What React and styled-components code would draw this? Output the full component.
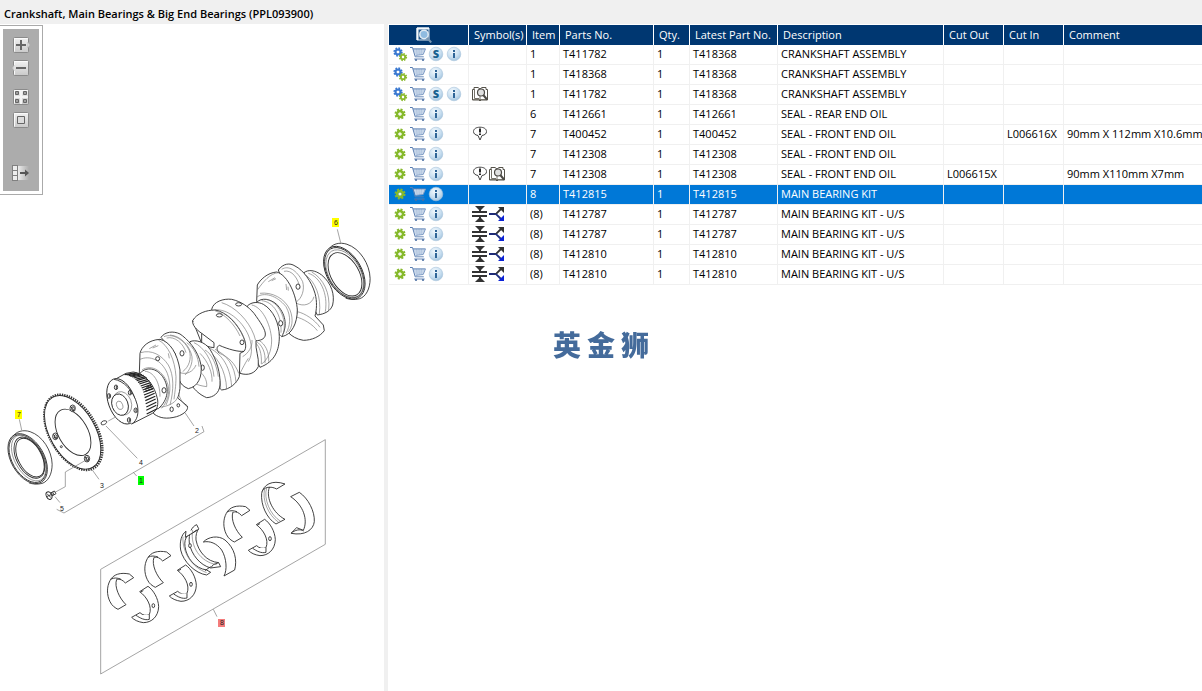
import { useState } from "react";

// styles
import styled, { createGlobalStyle } from "styled-components";

// Colors
const navy = "#003771";
const selectedBlue = "#0078d7";
const line = "#f0f0f0";
const steel = "#446b9b";

const columns = [
  { label: "Symbol(s)", width: 58 },
  { label: "Item", width: 33 },
  { label: "Parts No.", width: 94 },
  { label: "Qty.", width: 36 },
  { label: "Latest Part No.", width: 88 },
  { label: "Description", width: 166 },
  { label: "Cut Out", width: 60 },
  { label: "Cut In", width: 60 },
  { label: "Comment" },
];

const parts = [
  { kit: true, s: true, item: "1", no: "T411782", latest: "T418368", desc: "CRANKSHAFT ASSEMBLY" },
  { kit: true, item: "1", no: "T418368", latest: "T418368", desc: "CRANKSHAFT ASSEMBLY" },
  { kit: true, s: true, symbols: ["book"], item: "1", no: "T411782", latest: "T418368", desc: "CRANKSHAFT ASSEMBLY" },
  { item: "6", no: "T412661", latest: "T412661", desc: "SEAL - REAR END OIL" },
  { symbols: ["note"], item: "7", no: "T400452", latest: "T400452", desc: "SEAL - FRONT END OIL", cutIn: "L006616X", comment: "90mm X 112mm X10.6mm" },
  { item: "7", no: "T412308", latest: "T412308", desc: "SEAL - FRONT END OIL" },
  { symbols: ["note", "book"], item: "7", no: "T412308", latest: "T412308", desc: "SEAL - FRONT END OIL", cutOut: "L006615X", comment: "90mm X110mm X7mm" },
  { item: "8", no: "T412815", latest: "T412815", desc: "MAIN BEARING KIT" },
  { symbols: ["size", "branch"], item: "(8)", no: "T412787", latest: "T412787", desc: "MAIN BEARING KIT - U/S" },
  { symbols: ["size", "branch"], item: "(8)", no: "T412787", latest: "T412787", desc: "MAIN BEARING KIT - U/S" },
  { symbols: ["size", "branch"], item: "(8)", no: "T412810", latest: "T412810", desc: "MAIN BEARING KIT - U/S" },
  { symbols: ["size", "branch"], item: "(8)", no: "T412810", latest: "T412810", desc: "MAIN BEARING KIT - U/S" },
];

const App = () => {
  const [selected, setSelected] = useState(7);

  return (
    <Page>
      <GlobalStyle />
      <Title>Crankshaft, Main Bearings &amp; Big End Bearings (PPL093900)</Title>
      <Panes>
        <Viewer>
          <Diagram />
          <ToolFrame>
            <Tools>
              <Tool aria-label="Zoom in"><ZoomInIcon /></Tool>
              <Tool aria-label="Zoom out"><ZoomOutIcon /></Tool>
              <Tool $gap={6} aria-label="Fit"><FitIcon /></Tool>
              <Tool aria-label="Actual size"><ActualIcon /></Tool>
              <Tool $gap={30} aria-label="Hide list"><HideIcon /></Tool>
            </Tools>
          </ToolFrame>
        </Viewer>
        <List>
          <Table>
            <colgroup>
              <Col $width={80} />
              {columns.map((c) => (
                <Col key={c.label} $width={c.width} />
              ))}
            </colgroup>
            <thead>
              <tr>
                <Th $center>
                  <IconButton aria-label="Search parts"><SearchIcon /></IconButton>
                </Th>
                {columns.map((c) => (
                  <Th key={c.label}>{c.label}</Th>
                ))}
              </tr>
            </thead>
            <tbody>
              {parts.map((p, i) => (
                <Tr key={i} $selected={i === selected} onClick={() => setSelected(i)}>
                  <Td>
                    <Actions>
                      <IconButton aria-label="Part">{p.kit ? <KitIcon /> : <GearIcon />}</IconButton>
                      <IconButton aria-label="Add to cart"><CartIcon /></IconButton>
                      {p.s && <IconButton aria-label="Supersession"><Badge letter="S" /></IconButton>}
                      <IconButton aria-label="Information"><Badge letter="i" /></IconButton>
                    </Actions>
                  </Td>
                  <Td>
                    <Symbols>
                      {(p.symbols || []).map((name) => {
                        const Symbol = symbolIcons[name];
                        return <Symbol key={name} />;
                      })}
                    </Symbols>
                  </Td>
                  <Td>{p.item}</Td>
                  <Td>{p.no}</Td>
                  <Td>1</Td>
                  <Td>{p.latest}</Td>
                  <Td>{p.desc}</Td>
                  <Td>{p.cutOut}</Td>
                  <Td>{p.cutIn}</Td>
                  <Td>{p.comment}</Td>
                </Tr>
              ))}
            </tbody>
          </Table>
        </List>
      </Panes>
      <Watermark>
        <span>英</span>
        <span>金</span>
        <span>狮</span>
      </Watermark>
    </Page>
  );
};

// Toolbar icons
const Plate = () => (
  <>
    <defs>
      <linearGradient id="plate" x1="0" y1="0" x2="0" y2="1">
        <stop offset="0" stopColor="#f2f2f2" />
        <stop offset="1" stopColor="#c9c9c9" />
      </linearGradient>
    </defs>
    <rect x="1.5" y="0.5" width="15" height="15" rx="1" fill="url(#plate)" stroke="#8a8a8a" />
    <path d="M2.5 14.5v-13h13" fill="none" stroke="#fafafa" />
  </>
);

const ZoomInIcon = () => (
  <svg width="18" height="16" viewBox="0 0 18 16">
    <Plate />
    <path d="M16 5l2 3-2 3z" fill="#e8e8e8" stroke="#999" strokeWidth="0.5" />
    <path d="M9 3v10M4 8h10" stroke="#666" strokeWidth="2" />
  </svg>
);

const ZoomOutIcon = () => (
  <svg width="18" height="16" viewBox="0 0 18 16">
    <Plate />
    <path d="M2 5L0 8l2 3z" fill="#e8e8e8" stroke="#999" strokeWidth="0.5" />
    <path d="M4 8h10" stroke="#666" strokeWidth="2" />
  </svg>
);

const FitIcon = () => (
  <svg width="18" height="16" viewBox="0 0 18 16">
    <Plate />
    <path d="M9 1v14M2 8h14" stroke="#f4f4f4" strokeWidth="2" />
    <path d="M3.5 2.5h3v3h-3zM11.5 2.5h3v3h-3zM3.5 10.5h3v3h-3zM11.5 10.5h3v3h-3z" fill="#a0a0a0" stroke="#666" />
  </svg>
);

const ActualIcon = () => (
  <svg width="18" height="16" viewBox="0 0 18 16">
    <Plate />
    <path d="M5.5 4.5h7v7h-7z" fill="#dcdcdc" stroke="#666" />
  </svg>
);

const HideIcon = () => (
  <svg width="18" height="16" viewBox="0 0 18 16">
    <defs>
      <linearGradient id="fade">
        <stop offset="0" stopColor="#ececec" />
        <stop offset="1" stopColor="#acacac" />
      </linearGradient>
    </defs>
    <rect x="0" y="0" width="6" height="16" fill="#808080" />
    <path d="M1 1h4v4H1zM1 6h4v4H1zM1 11h4v4H1z" fill="#ededed" />
    <rect x="6" y="1" width="11" height="14" fill="url(#fade)" />
    <path d="M8 8h7" stroke="#555" strokeWidth="2" />
    <path d="M13 4.500l4 3.500-4 3.500z" fill="#555" />
  </svg>
);

// Row icons
const Cog = ({ x, y, r, fill, hole = "#fff" }) => (
  <g transform={`translate(${x} ${y})`}>
    <circle r={r * 0.86} fill="none" stroke={fill} strokeWidth={r * 0.4} strokeDasharray={`${r * 0.38} ${r * 0.295}`} />
    <circle r={r * 0.55} fill="none" stroke={fill} strokeWidth={r * 0.5} />
    <circle r={r * 0.3} fill={hole} />
  </g>
);

const GearIcon = () => (
  <svg width="16" height="16" viewBox="0 0 16 16">
    <Cog x={8} y={8} r={5.2} fill="#86b92b" hole="#f4fae6" />
  </svg>
);

const KitIcon = () => (
  <svg width="16" height="16" viewBox="0 0 16 16">
    <Cog x={6} y={6} r={4.4} fill="#3a78d0" />
    <Cog x={11} y={11} r={3.900} fill="#8aba2c" />
  </svg>
);

const CartIcon = () => (
  <svg width="16" height="16" viewBox="0 0 16 16">
    <path d="M3.500 3H15.500l-2.500 5.500-7.500.8z" fill="#d3dfee" />
    <path d="M4 5h11M4.700 7h9.300M6.500 3l.7 6M9 3l.3 6M11.500 3l-.4 6" fill="none" stroke="#9db6d6" strokeWidth="0.500" />
    <path d="M0 1.500h2.500l2.700 9.300M3 2.900h12.500" fill="none" stroke="#5b7fb2" />
    <path d="M15.500 2.900l-2.300 5.600-7.700.9" fill="none" stroke="#7f9dc6" />
    <path d="M5.200 10.800h8.600M4.200 13h10.500" fill="none" stroke="#5b7fb2" strokeWidth="0.900" />
    <circle cx="6" cy="14" r="1.100" fill="#4d70a2" />
    <circle cx="13" cy="14" r="1.100" fill="#4d70a2" />
  </svg>
);

const Badge = ({ letter }) => (
  <svg width="16" height="16" viewBox="0 0 16 16">
    <defs>
      <radialGradient id="badge" cx="0.4" cy="0.3" r="0.75">
        <stop offset="0" stopColor="#f1f8fd" />
        <stop offset="0.6" stopColor="#c9dff0" />
        <stop offset="1" stopColor="#9dc0dc" />
      </radialGradient>
    </defs>
    <circle cx="8" cy="8" r="6.800" fill="url(#badge)" stroke="#a9c5dc" strokeWidth="0.600" />
    {letter === "i" ? (
      <path d="M7 4h2v2H7zM7 7h2v5H7z" fill="#2f6597" />
    ) : (
      <BadgeText x="8" y="12">{letter}</BadgeText>
    )}
  </svg>
);

const SearchIcon = () => (
  <svg width="16" height="16" viewBox="0 0 16 16">
    <path d="M1 1h12v12H1z" fill="#24598d" stroke="#dbe8f2" />
    <path d="M1 1.500h12M1.500 1v12" stroke="#f4f8fb" strokeWidth="2" />
    <circle cx="8" cy="7.500" r="4.200" fill="#8fbbe0" stroke="#dfeaf3" strokeWidth="1.500" />
    <path d="M11.200 11l4 4.500" stroke="#7895b0" strokeWidth="2" />
  </svg>
);

// Symbol icons
const BookIcon = () => (
  <svg width="16" height="16" viewBox="0 0 16 16">
    <path d="M0.500 3.500h1.500V1.500h4L8 3l2-1.500h4v2h1.500v10.500H9L8 15l-1-1H0.500z" fill="#fff" stroke="#55524a" />
    <path d="M2.500 3v9.500h4.500M8 3v11M1 13.500h14" fill="none" stroke="#77736a" />
    <circle cx="9" cy="6.500" r="3.500" fill="#e0e0e0" stroke="#4c4a45" strokeWidth="1.200" />
    <path d="M11.300 9l3.700 4.500" stroke="#4c4a45" strokeWidth="2" />
  </svg>
);

const NoteIcon = () => (
  <svg width="16" height="16" viewBox="0 0 16 16">
    <path d="M6 9.500C3 9 1.500 7.500 1.500 5.500 1.500 3 4 1.200 8 1.200s6.500 1.800 6.500 4.300c0 2.200-1.500 3.500-4.500 4L8 14z" fill="#fff" stroke="#444" />
    <path d="M8 2.500v4M8 7.500v1.500" stroke="#111" strokeWidth="1.800" />
  </svg>
);

const SizeIcon = () => (
  <svg width="16" height="16" viewBox="0 0 16 16">
    <path d="M3 0h10L9 4v1H7V4zM0 5h15v2H0zM0 9h15v2H0zM7 11h2v1l4 4H3l4-4z" fill="#333" />
  </svg>
);

const BranchIcon = () => (
  <svg width="16" height="16" viewBox="0 0 16 16">
    <path d="M0 8h6" stroke="#1f2b78" strokeWidth="2" />
    <path d="M5.500 8l2-.5 5-5" fill="none" stroke="#333" strokeWidth="1.800" />
    <path d="M5.500 8l2 .5 5 5" fill="none" stroke="#20307f" strokeWidth="1.800" />
    <path d="M9 1h6v6z" fill="#333" />
    <path d="M15 9v6H9z" fill="#0b22d6" />
  </svg>
);

const symbolIcons = { book: BookIcon, note: NoteIcon, size: SizeIcon, branch: BranchIcon };

// Diagram parts
const Seal = ({ x, y, scale = 1 }) => (
  <g transform={`translate(${x} ${y}) scale(${scale})`}>
    <path d="M-52 -66C-38 -90 -14 -94 8 -87C48 -74 78 -26 79 18C79 50 66 74 46 80C30 84 16 82 4 78" />
    <ellipse rx="53" ry="88" transform="rotate(-30)" />
    <ellipse rx="50" ry="84" transform="rotate(-30)" />
  </g>
);

const UpperShell = ({ x, y }) => (
  <g transform={`translate(${x} ${y})`}>
    <path d="M60 452C70 432 92 427 118 432L131 443L106 459C98 450 90 446 80 448C72 470 88 505 108 524L84 538C76 534 66 528 60 515C50 495 50 470 60 452Z" />
    <path d="M62 448C72 442 82 444 92 447" />
  </g>
);

const LowerShell = ({ x, y }) => (
  <g transform={`translate(${x} ${y})`}>
    <path d="M149 485L174 469C190 480 205 505 206 530C205 560 185 578 160 578C145 576 132 570 125 562L150 548C158 556 168 558 178 554C188 530 170 500 149 485Z" />
    <path d="M138 556C150 564 164 572 178 568L178 554M152 486L160 482" />
    <ellipse cx="190" cy="527" rx="4" ry="6" />
  </g>
);

// gear teeth on the crankshaft nose
const teeth = Array.from({ length: 21 }, (_, i) => {
  const t = i / 20;
  const u = 1 - t;
  return {
    x: Math.round(u * u * 104 + 2 * u * t * 166 + t * t * 170),
    y: Math.round(u * u * 194 + 2 * u * t * 202 + t * t * 312),
  };
});

const Diagram = () => (
  <Drawing viewBox="0 24 384 667" role="img" aria-label="Crankshaft diagram">
    {/* shaft, rear half */}
    <g transform="translate(180 210) scale(0.3333)">
      <path d="M372 188C385 178 405 180 425 195C455 220 465 255 458 285C452 303 435 312 412 315L380 250Z" />
      <path className="thin" d="M385 190C420 200 445 250 436 305M395 186C430 205 452 250 446 300M378 196C405 215 425 260 418 312" />
      <path d="M295 180C310 160 330 158 345 168C370 180 395 215 405 250C412 275 410 300 405 318L430 345L433 362C420 380 395 391 370 391C350 388 335 378 325 368L340 300Z" />
      <path className="thin" d="M305 178C325 165 350 180 368 215C375 240 365 265 350 275M312 184C335 178 355 205 360 235M350 280C370 290 395 285 402 260M352 305C375 310 405 330 420 352M345 320C370 325 400 345 412 362M352 312L350 290" />
      <ellipse cx="354" cy="230" rx="6" ry="8" />
      <path d="M230 275L232 225C240 210 262 188 290 186C325 195 350 260 352 300C352 340 335 375 305 380L262 330Z" />
      <path className="thin" d="M232 240C250 215 270 190 295 188M240 250C275 245 315 265 330 300C342 330 335 355 325 365M265 215L285 203M275 212L288 206M318 222L320 240M324 230L325 242M230 262C250 245 290 255 318 290C335 320 330 350 318 370" />
      <path d="M230 277C245 262 270 266 290 283C315 310 325 345 305 380" />
      <path className="thin" d="M245 272C280 275 306 315 303 368M258 268C295 275 322 325 310 372" />
      <ellipse cx="302" cy="340" rx="6" ry="8" />
      <path d="M202 288C215 275 235 275 250 283C280 300 298 340 298 380C298 420 285 455 240 472L205 400Z" />
      <path className="thin" d="M215 285C245 290 272 340 275 390C275 425 262 450 245 462M230 395C245 405 258 425 255 460M238 392C255 402 268 425 266 455M228 400C238 410 246 430 244 462" />
      <path d="M95 298C100 275 130 265 155 268C185 275 205 290 222 310C240 335 258 360 256 375C254 388 240 392 228 392C225 420 238 440 235 470C225 490 205 498 180 490L150 400Z" />
      <path className="thin" d="M125 278C165 290 205 330 222 375C225 385 226 390 228 392M104 300C140 295 185 330 205 375C215 400 220 430 205 455M205 445C195 460 188 475 180 490M188 440C205 430 218 410 216 390" />
      <path d="M38 332C50 310 80 300 105 300C140 305 175 345 190 380C198 398 200 415 192 424C185 428 180 430 180 430L178 500C170 520 150 538 125 540L60 480L65 400Z" />
      <path d="M38 332C36 345 50 360 65 370L102 398L102 413C90 412 75 408 65 400L65 370M192 424C175 426 145 418 118 406C110 410 108 418 118 430" />
      <path className="thin" d="M105 302C135 312 165 345 180 378M85 412C120 430 150 460 155 530M105 418C140 435 165 465 168 518M75 418C110 435 138 480 140 538M65 425C100 445 122 490 122 535M118 430C145 440 165 460 176 490M132 310C160 325 185 360 195 395" />
      <ellipse cx="118" cy="316" rx="9" ry="5" />
      <ellipse cx="176" cy="283" rx="9" ry="5" />
      <ellipse cx="186" cy="397" rx="6" ry="7" />
      <path className="thin" d="M472 58L482 98" />
      <Seal x={493} y={188} scale={0.98} />
      <ellipse className="thin" cx="494" cy="191" rx="47" ry="78" transform="rotate(-30 494 191)" />
      <ellipse cx="495" cy="193" rx="42" ry="71" transform="rotate(-30 495 193)" />
    </g>

    {/* shaft, front half */}
    <g transform="translate(90 310) scale(0.3333)">
      <path d="M300 95C315 88 345 95 360 118C380 150 392 190 390 225C388 250 370 262 350 263C330 255 315 240 308 230L290 150Z" />
      <path className="thin" d="M312 98C340 110 368 150 372 200M330 130C355 155 368 190 366 215M335 190C345 200 352 215 350 230C335 228 322 225 316 220M345 120C365 130 380 165 385 200" />
      <ellipse cx="338" cy="173" rx="5" ry="8" />
      <path d="M213 82C225 65 250 62 270 72C290 85 325 120 333 165C337 200 325 230 295 236C280 230 272 222 268 210L255 130Z" />
      <path className="thin" d="M222 80C250 68 285 92 298 122C305 145 298 170 278 185M230 84C255 78 280 100 288 128M240 75C275 78 300 110 306 140C308 160 300 180 285 195M270 188C290 195 310 185 318 165M290 98C312 112 325 140 327 170" />
      <ellipse cx="276" cy="130" rx="6" ry="8" />
      <path d="M148 190L150 130C155 110 175 90 210 88C240 95 262 130 270 180L270 235C268 250 265 258 263 264L292 288C296 298 285 312 260 320C230 328 210 325 192 312L160 260Z" />
      <path className="thin" d="M152 128C185 118 215 135 235 165C252 195 252 240 240 285M150 148C180 135 215 150 232 190C245 225 240 260 228 285M205 90C235 105 255 150 258 200C258 230 254 250 252 268M178 116L198 105M188 114L205 107M235 130L238 145M262 264C255 280 230 292 200 292M266 250C270 270 282 282 290 290" />
      <ellipse cx="203" cy="146" rx="6" ry="6" />
      <path d="M150 190C170 168 200 175 218 200C240 232 235 270 205 296L150 300Z" />
      <path className="thin" d="M156 180C185 160 222 185 234 225C240 250 232 275 215 295M165 184C190 185 210 215 210 260" />
      <ellipse cx="222" cy="241" rx="6" ry="8" />
      <ellipse cx="245" cy="298" rx="5" ry="7" />
      <ellipse cx="265" cy="286" rx="4" ry="5" />
      <path d="M68 212L108 190L130 186C165 190 195 225 203 270C205 290 200 305 180 314L125 342Z" />
      {teeth.map((p, i) => (
        <path key={i} className="tooth" d={`M${p.x} ${p.y}l30 -${5 + Math.round(i / 2)}`} />
      ))}
      <path className="tooth" d="M165 238l22 -8M166 244l24 -8M168 232l16 -6" />
      <ellipse cx="95" cy="274" rx="40" ry="71" transform="rotate(-20 95 274)" />
      <path d="M72 208C100 212 130 240 142 285C147 310 142 332 125 342" />
      <ellipse className="thin" cx="97" cy="280" rx="27" ry="36" transform="rotate(-20 97 280)" />
      <ellipse cx="90" cy="284" rx="24" ry="33" transform="rotate(-20 90 284)" />
      <ellipse className="thin" cx="89" cy="286" rx="9" ry="13" transform="rotate(-20 89 286)" />
      {[[78, 232], [120, 248], [57, 258], [137, 301], [117, 330]].map(([x, y]) => (
        <g key={x}>
          <ellipse cx={x} cy={y} rx="5" ry="7" />
          <path d={`M${x + 1} ${y - 5}v10`} />
        </g>
      ))}
    </g>

    {/* timing ring, front seal and fixings */}
    <g transform="translate(0 380) scale(0.3333)">
      <path className="thin" d="M555 98L582 138M170 388L192 399L612 155L606 138M400 277L410 288M318 138L412 235M325 123L345 112M277 270L297 298M58 118L65 150M165 350L180 368" />
      <ellipse className="teeth" cx="220" cy="157" rx="70" ry="123" transform="rotate(-30 220 157)" />
      <ellipse cx="218" cy="157" rx="68" ry="121" transform="rotate(-30 218 157)" />
      <ellipse cx="219" cy="157" rx="44" ry="76" transform="rotate(-30 219 157)" />
      {[[218, 85], [166, 169], [261, 236]].map(([x, y]) => (
        <g key={x}>
          <ellipse cx={x} cy={y} rx="8" ry="10" />
          <ellipse cx={x + 1} cy={y + 1} rx="4" ry="6" />
          <path d={`M${x - 6} ${y - 6}l10 14`} />
        </g>
      ))}
      <circle cx="184" cy="200" r="3" />
      <path className="thin" d="M262 238L196 276L196 320L165 337" />
      <Seal x={83} y={236} scale={0.93} />
      <ellipse className="thin" cx="86" cy="234" rx="42" ry="75" transform="rotate(-29 86 234)" />
      <ellipse cx="88" cy="233" rx="38" ry="67" transform="rotate(-28 88 233)" />
      <ellipse cx="90" cy="233" rx="35" ry="63" transform="rotate(-28 90 233)" />
      <path d="M303 129C305 123 315 120 320 124C322 130 312 136 305 134Z" />
      <path d="M150 340L163 333L168 341L156 348M154 338l4 9M158 336l4 9" />
      <ellipse cx="147" cy="347" rx="8" ry="12" transform="rotate(-25 147 347)" />
      <path d="M141 341l12 12M140 350l13 -6" />
    </g>

    {/* bearing kit */}
    <g transform="translate(90 430) scale(0.3333)">
      <path className="thin" d="M32 418L706 29V343L32 732ZM370 538L381 560" />
      <UpperShell x={0} y={0} />
      <UpperShell x={112} y={-66} />
      <UpperShell x={349} y={-202} />
      <LowerShell x={0} y={0} />
      <LowerShell x={113} y={-64} />
      <LowerShell x={350} y={-201} />
      <path d="M288 304C275 312 268 335 272 360C280 395 315 430 350 435L362 427L350 420C315 415 290 385 285 350C283 335 286 325 292 318Z" />
      <path d="M320 284C305 290 295 310 298 340C305 375 330 405 362 414L392 410L386 398C350 395 325 365 318 330C317 315 320 305 326 296Z" />
      <path d="M288 304L286 322L326 298M304 312L320 300M362 414L370 404L386 398M345 422L362 410" />
      <path className="thin" d="M279 320C276 365 305 412 350 428M308 300C300 350 330 395 380 404" />
      <ellipse cx="300" cy="347" rx="4" ry="6" />
      <path d="M340 336C355 320 385 315 405 330C435 355 442 390 434 420L402 438C412 420 410 385 395 360C380 340 360 332 340 336Z" />
      <path d="M585 162L560 177C552 173 545 171 538 172C527 205 550 250 585 268L558 282C530 265 512 225 515 190C520 165 545 148 585 162Z" />
      <path d="M516 184C522 174 532 171 540 172" />
      <path className="thin" d="M530 174C520 205 540 255 572 274M524 176C516 210 534 255 566 277" />
      <path d="M602 200L628 187C655 205 675 245 673 275C670 300 645 318 603 310L620 293L640 301C655 270 640 225 602 200Z" />
      <path d="M603 310C615 300 630 296 641 303" />
    </g>

    <Mark x="332" y="218" width="7" height="9" $color="#ffff00" />
    <Mark x="15" y="410" width="7" height="9" $color="#ffff00" />
    <Mark x="138" y="476" width="6" height="9" $color="#00ff00" />
    <Mark x="218" y="619" width="7" height="8" $color="#f47c7c" />
    <Callout x="336" y="225">6</Callout>
    <Callout x="19" y="417">7</Callout>
    <Callout x="141" y="483">1</Callout>
    <Callout x="222" y="625">8</Callout>
    <Callout x="197" y="433">2</Callout>
    <Callout x="141" y="465">4</Callout>
    <Callout x="102" y="488">3</Callout>
    <Callout x="62" y="511">5</Callout>
  </Drawing>
);

const GlobalStyle = createGlobalStyle`
  body {
    margin: 0;
    background-color: white;
    font-family: "Open Sans", "Noto Sans", sans-serif;
    font-size: 11px;
    line-height: 14px;
    color: black;
  }
`;

const Page = styled.div`
  display: flex;
  flex-direction: column;
  min-height: 100vh;
`;

const Title = styled.h1`
  margin: 0;
  padding: 7px 4px 3px;
  font-size: 11px;
  line-height: 14px;
  font-weight: 600;
  background-color: ${line};
`;

const Panes = styled.main`
  display: flex;
  flex: 1;
`;

const Viewer = styled.section`
  position: relative;
  flex: 0 0 384px;
  border-right: 4px solid ${line};
`;

const Drawing = styled.svg`
  display: block;
  width: 100%;

  path,
  ellipse,
  circle {
    fill: white;
    stroke: #2c2c2c;
    stroke-width: 2.7;
    stroke-linejoin: round;
  }
  .thin {
    fill: none;
    stroke: #777;
    stroke-width: 2;
  }
  .tooth {
    stroke: #222;
    stroke-width: 3.5;
  }
  .teeth {
    stroke: #333;
    stroke-width: 9;
    stroke-dasharray: 4 3;
  }
`;

const Mark = styled.rect`
  fill: ${(p) => p.$color};
`;

const Callout = styled.text`
  font-family: "Liberation Sans", Arial, sans-serif;
  font-size: 7px;
  text-anchor: middle;
  fill: #222;
`;

const ToolFrame = styled.div`
  position: absolute;
  top: 1px;
  left: 0;
  padding: 3px;
  border: 1px solid #aaa;
  border-left: none;
  background-color: white;
`;

const Tools = styled.div`
  display: flex;
  flex-direction: column;
  align-items: center;
  gap: 7px;
  width: 36px;
  padding: 8px 0 10px;
  background-color: #acacac;
`;

const Tool = styled.button`
  display: flex;
  margin: 0;
  margin-top: ${(p) => p.$gap || 0}px;
  padding: 0;
  border: none;
  background: none;
  cursor: pointer;
`;

const List = styled.section`
  flex: 1;
  min-width: 0;
  padding: 1px 0 0 1px;
`;

const Table = styled.table`
  width: 100%;
  table-layout: fixed;
  border-collapse: separate;
  border-spacing: 0;
`;

const Col = styled.col`
  width: ${(p) => (p.$width ? `${p.$width}px` : "auto")};
`;

const Th = styled.th`
  height: 20px;
  padding: ${(p) => (p.$center ? "0 10px 0 0" : "0 0 0 5px")};
  text-align: ${(p) => (p.$center ? "center" : "left")};
  font-weight: 400;
  white-space: nowrap;
  color: white;
  background-color: ${navy};
  border-right: 1px solid white;
  &:last-child {
    border-right: none;
  }
`;

const Td = styled.td`
  height: 17px;
  padding: 0 0 2px 3px;
  white-space: nowrap;
  border-right: 1px solid ${line};
  border-bottom: 1px solid ${line};
  &:last-child {
    border-right: none;
  }
`;

const Tr = styled.tr`
  color: ${(p) => (p.$selected ? "white" : "black")};
  background-color: ${(p) => (p.$selected ? selectedBlue : "white")};
`;

const Actions = styled.div`
  display: flex;
  gap: 2px;
`;

const Symbols = styled.div`
  display: flex;
  gap: 1px;
`;

const IconButton = styled.button`
  display: inline-flex;
  padding: 0;
  border: none;
  background: none;
  vertical-align: middle;
  cursor: pointer;
`;

const BadgeText = styled.text`
  font-family: "Open Sans", sans-serif;
  font-size: 11px;
  font-weight: 800;
  text-anchor: middle;
  fill: #17618f;
`;

const Watermark = styled.div`
  position: fixed;
  inset: 0 0 3px;
  display: flex;
  align-items: center;
  justify-content: center;
  gap: 6px;
  font-family: "Noto Sans CJK SC", sans-serif;
  font-size: 28px;
  line-height: 28px;
  font-weight: 900;
  color: ${steel};
  pointer-events: none;
`;

export default App;
